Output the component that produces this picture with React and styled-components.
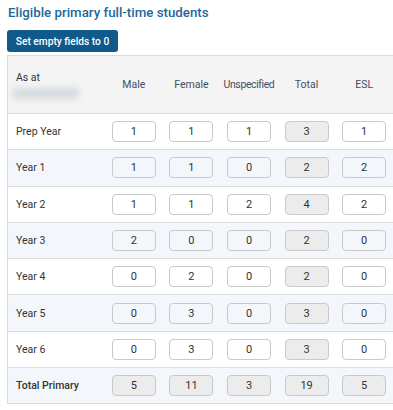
import React from "react";
import styled, { createGlobalStyle } from "styled-components";

const GlobalStyle = createGlobalStyle`
  body {
    margin: 0;
    background: #fff;
    font-family: Roboto, "Liberation Sans", sans-serif;
    color: #333;
  }
`;

const Page = styled.div`
  padding: 4px 0 0 7px;
`;

const Title = styled.h2`
  margin: 0 0 0 1px;
  font-size: 13.3px;
  font-weight: 500;
  color: #24679a;
  line-height: 18px;
`;

const Button = styled.button`
  margin-top: 8px;
  height: 22px;
  width: 111px;
  padding: 0;
  border: none;
  border-radius: 3px;
  background: #0f5a8a;
  color: #fff;
  font-family: inherit;
  font-size: 10.2px;
  font-weight: 500;
`;

const Table = styled.table`
  margin-top: 3px;
  width: 386px;
  border-collapse: collapse;
  table-layout: fixed;
  border-left: 1px solid #dcdcdc;
  border-top: 1px solid #dcdcdc;
  font-size: 10.5px;
`;

const HeadRow = styled.tr`
  background: #f4f4f4;
  height: 58px;
`;

const Th = styled.th`
  font-weight: 400;
  color: #3f4f66;
  text-align: center;
  padding: 0;
  letter-spacing: ${(p) => (p.$tight ? "-0.4px" : "0")};
  width: ${(p) => (p.$label ? "97px" : "auto")};
`;

const AsAt = styled.div`
  text-align: left;
  padding-left: 8px;
  color: #333;
`;

const Blurred = styled.div`
  margin: 4px 0 0 5px;
  width: 66px;
  height: 11px;
  background: #d6dbe0;
  filter: blur(3px);
`;

const Row = styled.tr`
  height: 36.3px;
  background: ${(p) => (p.$shade ? "#f3f7fb" : "#fff")};
  border-top: 1px solid #dddddd;
  border-bottom: ${(p) => (p.$last ? "1px solid #dddddd" : "none")};
`;

const Label = styled.td`
  padding-left: 8px;
  color: #333;
  font-weight: ${(p) => (p.$bold ? 500 : 400)};
`;

const Cell = styled.td`
  text-align: center;
  padding: 0;
`;

const Box = styled.div`
  margin: 0 auto;
  width: 44px;
  height: 21px;
  box-sizing: border-box;
  border: 1px solid #c9c9c9;
  border-radius: 4px;
  background: ${(p) => (p.$readonly ? "#ececec" : "transparent")};
  display: flex;
  align-items: center;
  justify-content: center;
  color: #333;
  font-size: 11px;
`;

const rows = [
  ["Prep Year", 1, 1, 1, 3, 1],
  ["Year 1", 1, 1, 0, 2, 2],
  ["Year 2", 1, 1, 2, 4, 2],
  ["Year 3", 2, 0, 0, 2, 0],
  ["Year 4", 0, 2, 0, 2, 0],
  ["Year 5", 0, 3, 0, 3, 0],
  ["Year 6", 0, 3, 0, 3, 0],
];

const totals = ["Total Primary", 5, 11, 3, 19, 5];

export default function App() {
  return (
    <Page>
      <GlobalStyle />
      <Title>Eligible primary full-time students</Title>
      <Button>Set empty fields to 0</Button>
      <Table>
        <thead>
          <HeadRow>
            <Th $label>
              <AsAt>As at</AsAt>
              <Blurred />
            </Th>
            <Th>Male</Th>
            <Th>Female</Th>
            <Th $tight>Unspecified</Th>
            <Th>Total</Th>
            <Th>ESL</Th>
          </HeadRow>
        </thead>
        <tbody>
          {rows.map((r, i) => (
            <Row key={r[0]} $shade={i % 2 === 1}>
              <Label>{r[0]}</Label>
              {r.slice(1).map((v, j) => (
                <Cell key={j}>
                  <Box $readonly={j === 3}>{v}</Box>
                </Cell>
              ))}
            </Row>
          ))}
          <Row $shade $last>
            <Label $bold>{totals[0]}</Label>
            {totals.slice(1).map((v, j) => (
              <Cell key={j}>
                <Box $readonly>{v}</Box>
              </Cell>
            ))}
          </Row>
        </tbody>
      </Table>
    </Page>
  );
}
